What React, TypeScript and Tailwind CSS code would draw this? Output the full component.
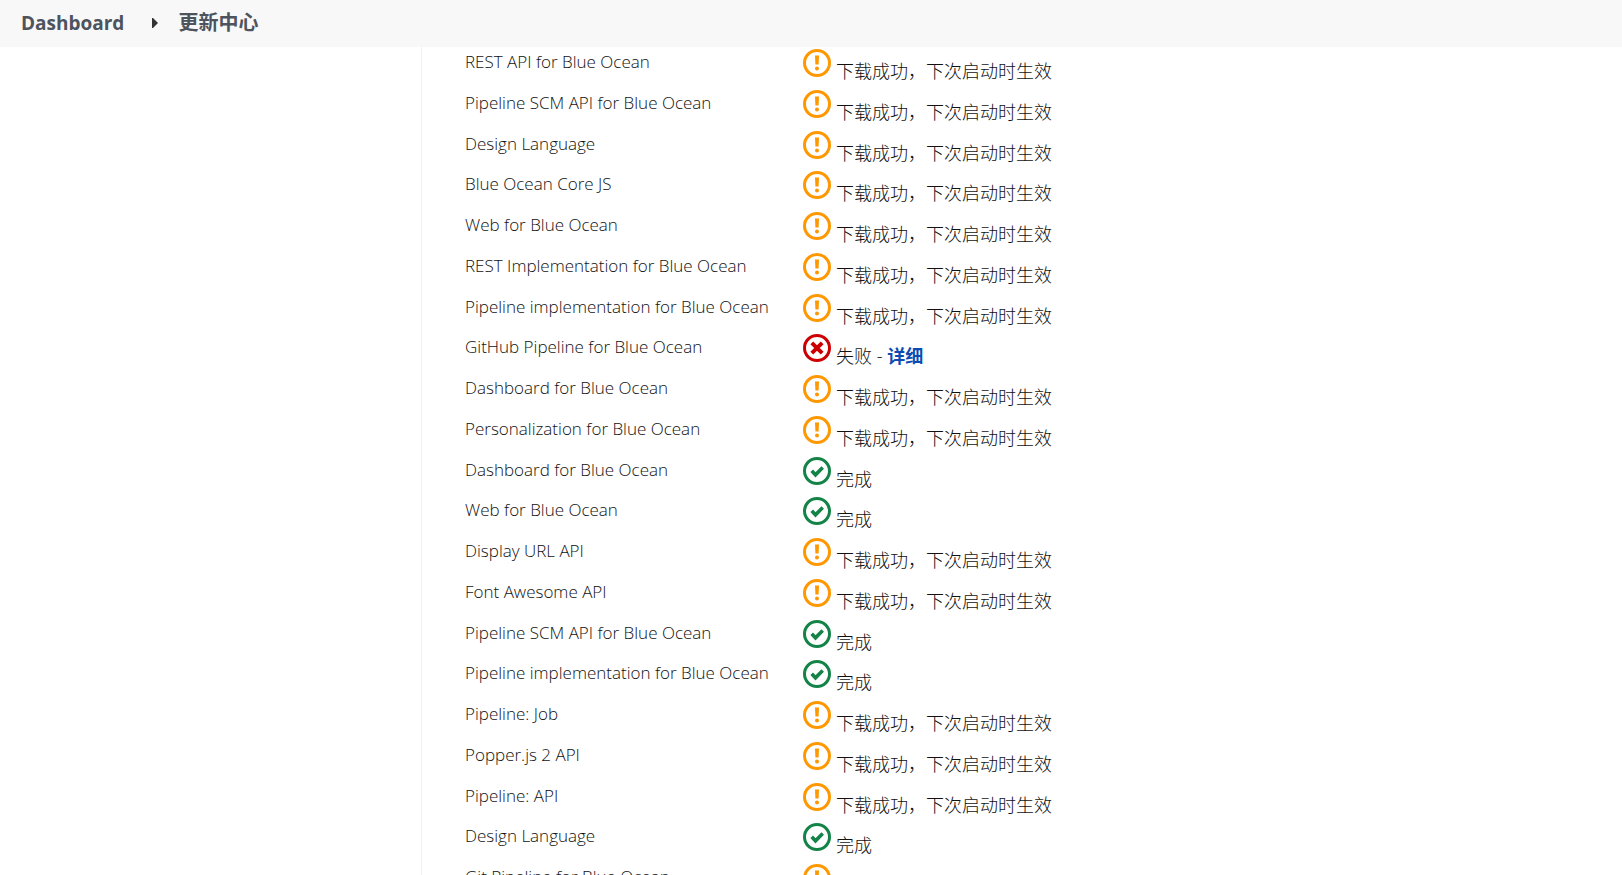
type Status = "pending" | "failed" | "done";

const jobs: { name: string; status: Status }[] = [
  { name: "REST API for Blue Ocean", status: "pending" },
  { name: "Pipeline SCM API for Blue Ocean", status: "pending" },
  { name: "Design Language", status: "pending" },
  { name: "Blue Ocean Core JS", status: "pending" },
  { name: "Web for Blue Ocean", status: "pending" },
  { name: "REST Implementation for Blue Ocean", status: "pending" },
  { name: "Pipeline implementation for Blue Ocean", status: "pending" },
  { name: "GitHub Pipeline for Blue Ocean", status: "failed" },
  { name: "Dashboard for Blue Ocean", status: "pending" },
  { name: "Personalization for Blue Ocean", status: "pending" },
  { name: "Dashboard for Blue Ocean", status: "done" },
  { name: "Web for Blue Ocean", status: "done" },
  { name: "Display URL API", status: "pending" },
  { name: "Font Awesome API", status: "pending" },
  { name: "Pipeline SCM API for Blue Ocean", status: "done" },
  { name: "Pipeline implementation for Blue Ocean", status: "done" },
  { name: "Pipeline: Job", status: "pending" },
  { name: "Popper.js 2 API", status: "pending" },
  { name: "Pipeline: API", status: "pending" },
  { name: "Design Language", status: "done" },
  { name: "Git Pipeline for Blue Ocean", status: "pending" },
];

const iconColors: Record<Status, string> = {
  pending: "text-[#ff9800]",
  failed: "text-[#cc0003]",
  done: "text-[#138347]",
};

function StatusIcon({ status }: { status: Status }) {
  return (
    <svg
      viewBox="0 0 28 28"
      className={`size-7 shrink-0 ${iconColors[status]}`}
      fill="none"
      stroke="currentColor"
      aria-hidden="true"
    >
      <circle cx="14" cy="14" r="12.5" strokeWidth="3" />
      {status === "pending" && (
        <g fill="currentColor" stroke="none">
          <path d="M12 6.5h4l-.4 9h-3.2z" />
          <circle cx="14" cy="19.5" r="2" />
        </g>
      )}
      {status === "failed" && <path d="M8.8 8.8l10.4 10.4M19.2 8.8L8.8 19.2" strokeWidth="4" />}
      {status === "done" && <path d="M8.7 13.8l3.8 4 7.2-7.2" strokeWidth="3.6" />}
    </svg>
  );
}

function StatusText({ status }: { status: Status }) {
  if (status === "failed") {
    return (
      <>
        失败 -{" "}
        <a href="#details" className="font-bold text-[#0b4bb3]">
          详细
        </a>
      </>
    );
  }
  return <>{status === "done" ? "完成" : "下载成功，下次启动时生效"}</>;
}

export default function App() {
  return (
    <div className="flex h-screen flex-col overflow-hidden bg-white font-['Open_Sans','Noto_Sans_CJK_SC',sans-serif] text-[#111]">
      <header className="shrink-0 bg-[#f8f8f8]">
        <nav aria-label="Breadcrumb" className="flex h-[47px] items-center px-[21px] pb-0.5 font-bold text-[#4d545d]">
          <a href="#dashboard" className="text-[19px] leading-6">
            Dashboard
          </a>
          <svg viewBox="0 0 6 10" className="mr-5 ml-7 h-[10px] w-[6px]" fill="#333" aria-hidden="true">
            <path d="M0 0h1l5 5-5 5H0z" />
          </svg>
          <a href="#updates" className="text-[20px] leading-6">
            更新中心
          </a>
        </nav>
      </header>
      <div className="flex min-h-0 grow">
        <aside className="w-[421px] shrink-0" />
        <main className="grow overflow-hidden border-l border-[#f0f0f0] pl-[43px]">
          <table className="text-left font-light">
            <tbody>
              {jobs.map((job, i) => (
                <tr key={i} className="h-[41px] align-top nth-[4n+3]:h-10">
                  <td className="w-[338px] pt-[3px] text-[17px] leading-6 whitespace-nowrap">{job.name}</td>
                  <td className="pt-[2px] whitespace-nowrap">
                    <div className="flex gap-[5px]">
                      <StatusIcon status={job.status} />
                      <span className="pt-2 text-[18px] leading-7">
                        <StatusText status={job.status} />
                      </span>
                    </div>
                  </td>
                </tr>
              ))}
            </tbody>
          </table>
        </main>
      </div>
    </div>
  );
}
